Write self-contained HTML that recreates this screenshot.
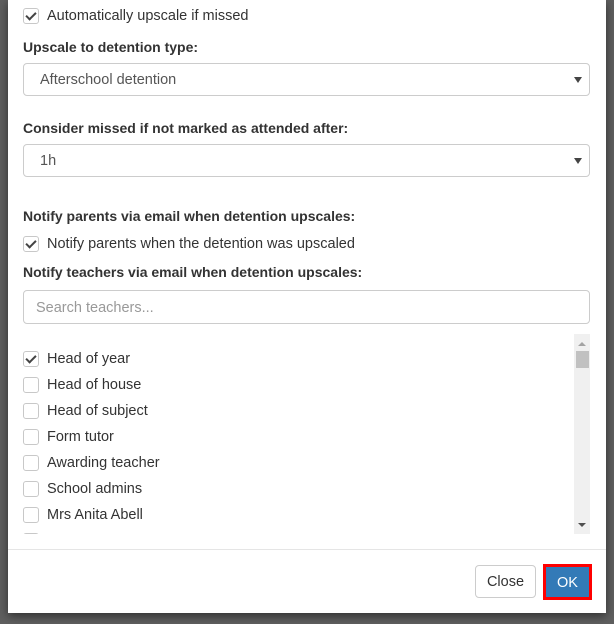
<!DOCTYPE html>
<html><head><style>
body{margin:0;width:614px;height:624px;background:#5f5f5f;font-family:"Liberation Sans",sans-serif;color:#333;position:relative;overflow:hidden}
.modal{position:absolute;left:8px;top:0;width:598px;height:613px;background:#fff;box-shadow:0 3px 9px rgba(0,0,0,.5)}
.a{position:absolute;white-space:nowrap;font-size:14.5px;line-height:17px}
.lbl{font-weight:bold;font-size:14px;color:#333}
.cb{position:absolute;width:14px;height:14px;border:1px solid #c8c8c8;border-radius:3px;background:#fff}
.cb.on::after{content:"";position:absolute;left:4px;top:1px;width:4px;height:8px;border:solid #444;border-width:0 2px 2px 0;transform:rotate(45deg)}
.sel{position:absolute;left:15px;width:567px;height:32px;border:1px solid #ccc;border-radius:4px;box-sizing:border-box}
.sel span{position:absolute;left:16px;top:8px;font-size:14.5px;line-height:17px;color:#555}
.sel i{position:absolute;right:7px;top:13px;border-left:4px solid transparent;border-right:4px solid transparent;border-top:6px solid #444}
</style></head><body>
<div class="modal">
<div class="cb on" style="left:15px;top:8px"></div><div class="a" style="left:39px;top:8px">Automatically upscale if missed</div>
<div class="a lbl" style="left:15px;top:39px">Upscale to detention type:</div>
<div class="sel" style="top:63px;height:33px"><span>Afterschool detention</span><i></i></div>
<div class="a lbl" style="left:15px;top:120px">Consider missed if not marked as attended after:</div>
<div class="sel" style="top:144px;height:33px"><span>1h</span><i></i></div>
<div class="a lbl" style="left:15px;top:208px">Notify parents via email when detention upscales:</div>
<div class="cb on" style="left:15px;top:236px"></div><div class="a" style="left:39px;top:236px">Notify parents when the detention was upscaled</div>
<div class="a lbl" style="left:15px;top:264px">Notify teachers via email when detention upscales:</div>
<div class="sel" style="top:290px;height:34px"><span style="color:#999;top:9px;left:12px">Search teachers...</span></div>
<div style="position:absolute;left:15px;top:334px;width:567px;height:200px;overflow:hidden">
<div class="cb on" style="left:0;top:17px"></div><div class="a" style="left:24px;top:17px">Head of year</div>
<div class="cb" style="left:0;top:43px"></div><div class="a" style="left:24px;top:43px">Head of house</div>
<div class="cb" style="left:0;top:69px"></div><div class="a" style="left:24px;top:69px">Head of subject</div>
<div class="cb" style="left:0;top:95px"></div><div class="a" style="left:24px;top:95px">Form tutor</div>
<div class="cb" style="left:0;top:121px"></div><div class="a" style="left:24px;top:121px">Awarding teacher</div>
<div class="cb" style="left:0;top:147px"></div><div class="a" style="left:24px;top:147px">School admins</div>
<div class="cb" style="left:0;top:173px"></div><div class="a" style="left:24px;top:173px">Mrs Anita Abell</div>
<div class="cb" style="left:0;top:199px"></div>
<div style="position:absolute;left:551px;top:0;width:17px;height:200px;background:#f0f0f0">
<div style="position:absolute;left:4px;top:8px;border-left:4px solid transparent;border-right:4px solid transparent;border-bottom:4px solid #a3a3a3"></div>
<div style="position:absolute;left:2px;top:17px;width:13px;height:17px;background:#c1c1c1"></div>
<div style="position:absolute;left:4px;top:189px;border-left:4px solid transparent;border-right:4px solid transparent;border-top:4px solid #505050"></div>
</div></div>
<div style="position:absolute;left:0;top:549px;width:598px;height:1px;background:#e5e5e5"></div>
<div style="position:absolute;left:467px;top:565px;width:61px;height:33px;border:1px solid #ccc;border-radius:4px;box-sizing:border-box;text-align:center;line-height:33px;font-size:14.5px">Close</div>
<div style="position:absolute;left:535px;top:564px;width:49px;height:36px;background:#f00;">
<div style="position:absolute;left:3px;top:3px;width:43px;height:30px;background:#337ab7;color:#fff;text-align:center;line-height:32px;font-size:14.5px">OK</div></div>
</div>
</body></html>
